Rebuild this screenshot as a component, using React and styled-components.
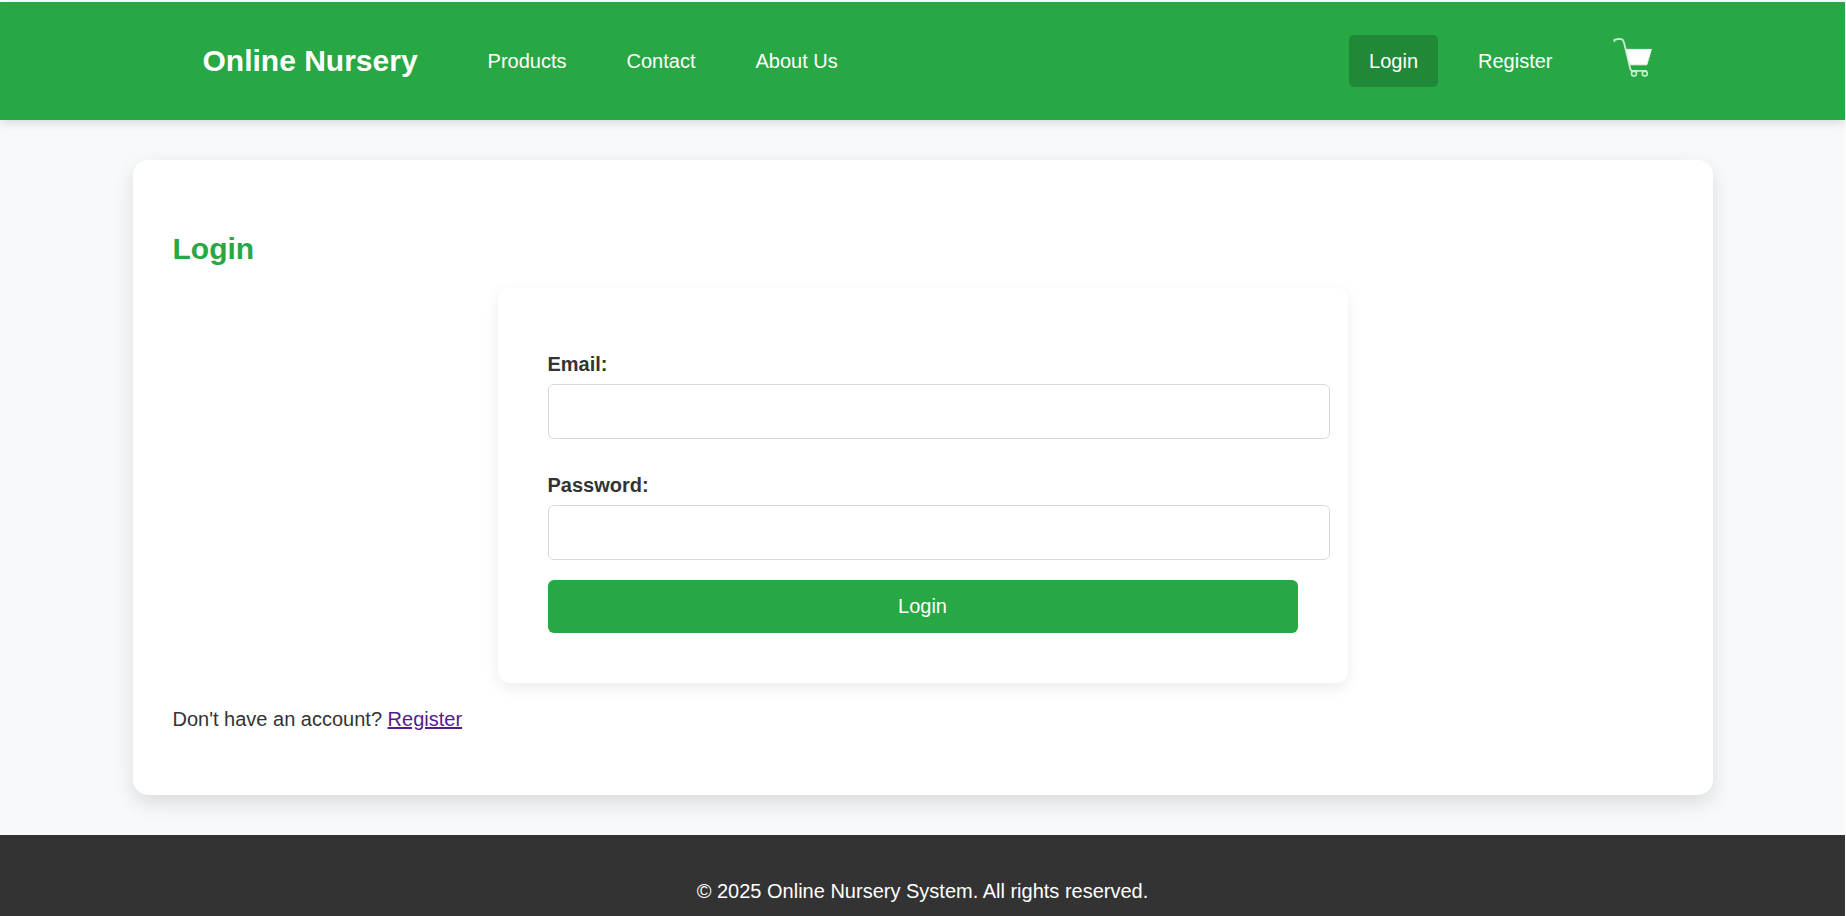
import React from "react";
import styled, { createGlobalStyle } from "styled-components";

const GlobalStyle = createGlobalStyle`
  body {
    margin: 0;
    background: #f8f9fb;
    color: #333;
    font-family: "Liberation Sans", Arial, sans-serif;
    font-size: 20px;
    line-height: 32px;
  }
`;

const Page = styled.div`
  display: flex;
  flex-direction: column;
  min-height: 100vh;
  box-sizing: border-box;
  border-top: 2px solid #fff;
  border-right: 1px solid #fff;
`;

const Header = styled.header`
  background: #28a745;
  box-shadow: 0 2px 10px rgba(0, 0, 0, 0.15);
  padding: 33px 20px;
`;

const HeaderInner = styled.div`
  display: flex;
  align-items: center;
  max-width: 1500px;
  margin: 0 auto;
`;

const Brand = styled.a`
  margin: 0 50px 0 30px;
  color: #fff;
  font-size: 30px;
  font-weight: bold;
  text-decoration: none;
  white-space: nowrap;
`;

const Nav = styled.nav`
  display: flex;
  align-items: center;
  gap: 20px;
  margin-left: ${(p) => (p.$end ? "auto" : "0")};
`;

const NavLink = styled.a`
  padding: 10px 20px;
  border-radius: 5px;
  background: ${(p) => (p.$active ? "#218838" : "transparent")};
  color: #fff;
  text-decoration: none;
  white-space: nowrap;
`;

const CartLink = styled.a`
  display: flex;
  padding: 0 20px;
`;

const CartIcon = styled.svg`
  width: 40px;
  height: 46px;
`;

const Card = styled.main`
  box-sizing: border-box;
  width: calc(100% - 40px);
  max-width: 1580px;
  margin: 40px auto;
  padding: 73px 40px 60px;
  border-radius: 15px;
  background: #fff;
  box-shadow: 0 8px 20px rgba(0, 0, 0, 0.12);
`;

const Title = styled.h2`
  margin: 0 0 23px;
  color: #28a745;
  font-size: 30px;
  line-height: 32px;
`;

const Form = styled.form`
  box-sizing: border-box;
  max-width: 850px;
  margin: 0 auto 20px;
  padding: 60px 50px 50px;
  border-radius: 12px;
  background: #fff;
  box-shadow: 0 5px 15px rgba(0, 0, 0, 0.08);
`;

const Field = styled.div`
  margin-bottom: ${(p) => (p.$last ? "20px" : "30px")};
`;

const Label = styled.label`
  display: block;
  margin-bottom: 4px;
  font-weight: bold;
`;

const Input = styled.input`
  display: block;
  box-sizing: border-box;
  width: calc(100% + 32px);
  height: 55px;
  padding: 15px;
  border: 1px solid #d9d9d9;
  border-radius: 6px;
  background: #fff;
  font: inherit;
`;

const SubmitButton = styled.button`
  display: block;
  width: 100%;
  height: 53px;
  padding: 0 0 2px;
  border: 0;
  border-radius: 6px;
  background: #28a745;
  color: #fff;
  font: inherit;
  cursor: pointer;
`;

const Hint = styled.p`
  margin: 0;
`;

const HintLink = styled.a`
  color: #551a8b;
`;

const Footer = styled.footer`
  flex: 1;
  padding: 40px 20px 9px;
  background: #333;
  color: #fff;
  text-align: center;
`;

const Copyright = styled.p`
  margin: 0;
`;

function Cart() {
  return (
    <CartIcon viewBox="0 0 40 46" fill="none" aria-hidden="true">
      <path
        d="M1.4 3.2V1.8Q5 .6 8.2 1.2Q10.4 1.8 11.2 5.2L17.4 31.2Q17.8 32.8 19.4 32.8H33"
        stroke="#c9ecd1"
        strokeWidth="1.8"
        strokeLinecap="round"
      />
      <path d="M13.2 11.4H38.4L33.8 26.8H17Z" fill="#fff" stroke="#e6f7ea" strokeWidth="1" />
      <circle cx="21" cy="35.6" r="2.5" stroke="#c9ecd1" strokeWidth="1.6" />
      <circle cx="31.8" cy="35.6" r="2.5" stroke="#c9ecd1" strokeWidth="1.6" />
    </CartIcon>
  );
}

export default function App() {
  return (
    <>
      <GlobalStyle />
      <Page>
        <Header>
          <HeaderInner>
            <Brand href="#home">Online Nursery</Brand>
            <Nav aria-label="Main">
              <NavLink href="#products">Products</NavLink>
              <NavLink href="#contact">Contact</NavLink>
              <NavLink href="#about">About Us</NavLink>
            </Nav>
            <Nav $end aria-label="Account">
              <NavLink href="#login" $active aria-current="page">Login</NavLink>
              <NavLink href="#register">Register</NavLink>
              <CartLink href="#cart" aria-label="Cart">
                <Cart />
              </CartLink>
            </Nav>
          </HeaderInner>
        </Header>
        <Card>
          <Title>Login</Title>
          <Form onSubmit={(e) => e.preventDefault()}>
            <Field>
              <Label htmlFor="email">Email:</Label>
              <Input id="email" type="email" name="email" />
            </Field>
            <Field $last>
              <Label htmlFor="password">Password:</Label>
              <Input id="password" type="password" name="password" />
            </Field>
            <SubmitButton type="submit">Login</SubmitButton>
          </Form>
          <Hint>
            Don't have an account? <HintLink href="#register">Register</HintLink>
          </Hint>
        </Card>
        <Footer>
          <Copyright>© 2025 Online Nursery System. All rights reserved.</Copyright>
        </Footer>
      </Page>
    </>
  );
}
